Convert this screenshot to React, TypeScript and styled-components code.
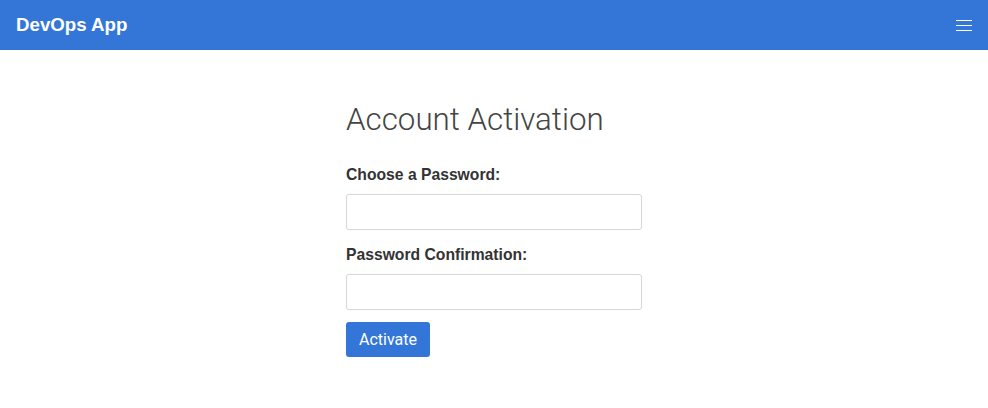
import React from 'react';
import styled, { createGlobalStyle } from 'styled-components';

const GlobalStyle = createGlobalStyle`
  body {
    margin: 0;
    background: #fff;
    font-family: "Liberation Sans", Arial, sans-serif;
  }
`;

const NavBar = styled.nav`
  display: flex;
  align-items: center;
  justify-content: space-between;
  height: 50px;
  padding: 0 16px;
  background: #3476d8;
`;

const Brand = styled.a`
  color: #fff;
  font-size: 18.7px;
  font-weight: 700;
  text-decoration: none;
`;

const MenuButton = styled.button`
  display: flex;
  flex-direction: column;
  gap: 4px;
  padding: 0;
  border: 0;
  background: none;

  span {
    display: block;
    width: 16px;
    height: 1px;
    background: #fff;
  }
`;

const Main = styled.main`
  width: 296px;
  margin: 0 auto;
  padding-top: 51px;
`;

const Title = styled.h1`
  margin: 0 0 27px;
  font-family: Roboto, "Liberation Sans", sans-serif;
  font-size: 31.3px;
  font-weight: 300;
  line-height: 38px;
  color: #444;
`;

const Field = styled.div`
  display: flex;
  flex-direction: column;
  margin-bottom: 16px;

  &:last-of-type {
    margin-bottom: 12px;
  }
`;

const Label = styled.label`
  margin-bottom: 10px;
  font-size: 15.7px;
  font-weight: 700;
  line-height: 18px;
  color: #333;
`;

const Input = styled.input`
  box-sizing: border-box;
  width: 100%;
  height: 36px;
  border: 1px solid #d6d6d6;
  border-radius: 3px;
  outline: none;
`;

const Button = styled.button`
  height: 35px;
  padding: 0 13px;
  border: 0;
  border-radius: 3px;
  background: #3476d8;
  color: #fff;
  font-family: Roboto, "Liberation Sans", sans-serif;
  font-size: 16px;
`;

export default function App() {
  return (
    <>
      <GlobalStyle />
      <NavBar>
        <Brand href="#">DevOps App</Brand>
        <MenuButton aria-label="menu">
          <span />
          <span />
          <span />
        </MenuButton>
      </NavBar>
      <Main>
        <Title>Account Activation</Title>
        <Field>
          <Label>Choose a Password:</Label>
          <Input type="password" />
        </Field>
        <Field>
          <Label>Password Confirmation:</Label>
          <Input type="password" />
        </Field>
        <Button>Activate</Button>
      </Main>
    </>
  );
}
